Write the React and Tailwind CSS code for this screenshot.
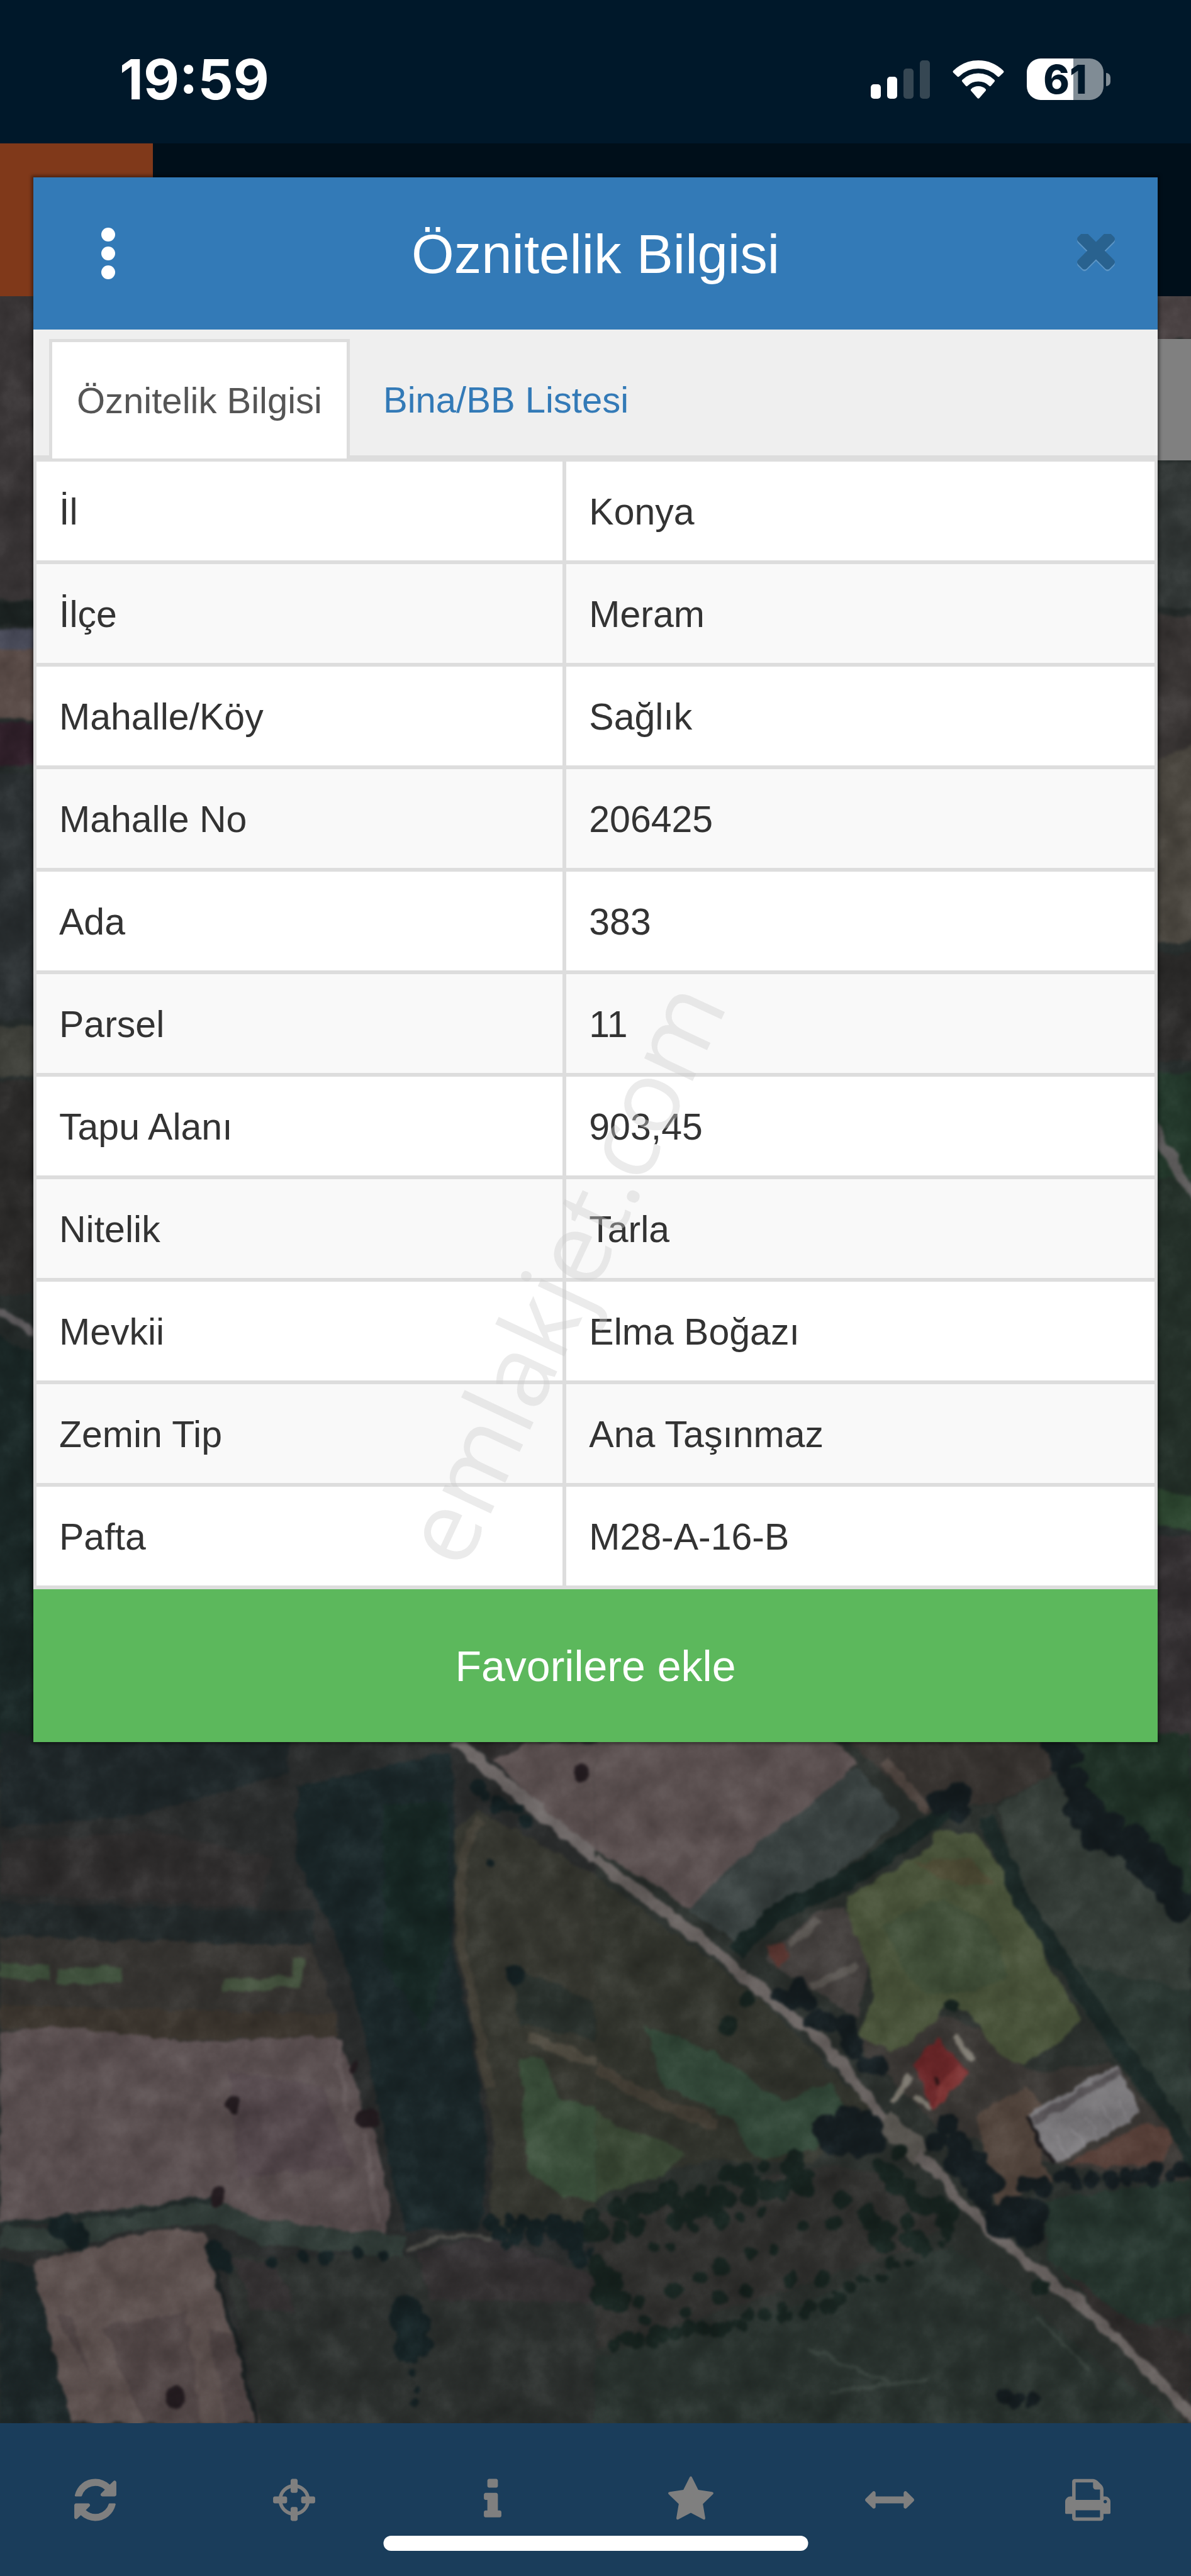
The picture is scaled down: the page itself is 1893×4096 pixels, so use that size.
import React from 'react';

const attributes = [
  ['İl', 'Konya'],
  ['İlçe', 'Meram'],
  ['Mahalle/Köy', 'Sağlık'],
  ['Mahalle No', '206425'],
  ['Ada', '383'],
  ['Parsel', '11'],
  ['Tapu Alanı', '903,45'],
  ['Nitelik', 'Tarla'],
  ['Mevkii', 'Elma Boğazı'],
  ['Zemin Tip', 'Ana Taşınmaz'],
  ['Pafta', 'M28-A-16-B'],
];

const tools = [
  {
    label: 'Yenile',
    width: 1536,
    className: 'w-[67px]',
    path: 'M1511 1056q0 5-1 7-64 268-268 434.5t-478 166.5q-146 0-282.5-55t-243.5-157l-129 129q-19 19-45 19t-45-19-19-45v-448q0-26 19-45t45-19h448q26 0 45 19t19 45-19 45l-137 137q71 66 161 102t187 36q134 0 250-65t186-179q11-17 53-117 8-23 30-23h192q13 0 22.5 9.5t9.5 22.5zm25-800v448q0 26-19 45t-45 19h-448q-26 0-45-19t-19-45 19-45l138-138q-148-137-349-137-134 0-250 65t-186 179q-11 17-53 117-8 23-30 23h-199q-13 0-22.5-9.5t-9.5-22.5v-7q65-268 270-434.5t480-166.5q146 0 284 55.5t245 156.5l130-129q19-19 45-19t45 19 19 45z',
  },
  {
    label: 'Konumum',
    width: 1536,
    className: 'w-[67px]',
    path: 'M1197 1024h-109q-26 0-45-19t-19-45v-128q0-26 19-45t45-19h109q-32-108-112.5-188.5t-188.5-112.5v109q0 26-19 45t-45 19h-128q-26 0-45-19t-19-45v-109q-108 32-188.5 112.5t-112.5 188.5h109q26 0 45 19t19 45v128q0 26-19 45t-45 19h-109q32 108 112.5 188.5t188.5 112.5v-109q0-26 19-45t45-19h128q26 0 45 19t19 45v109q108-32 188.5-112.5t112.5-188.5zm339-192v128q0 26-19 45t-45 19h-143q-37 161-154.5 278.5t-278.5 154.5v143q0 26-19 45t-45 19h-128q-26 0-45-19t-19-45v-143q-161-37-278.5-154.5t-154.5-278.5h-143q-26 0-45-19t-19-45v-128q0-26 19-45t45-19h143q37-161 154.5-278.5t278.5-154.5v-143q0-26 19-45t45-19h128q26 0 45 19t19 45v143q161 37 278.5 154.5t154.5 278.5h143q26 0 45 19t19 45z',
  },
  {
    label: 'Bilgi',
    width: 640,
    className: 'w-[28px]',
    path: 'M640 1344v128q0 26-19 45t-45 19h-512q-26 0-45-19t-19-45v-128q0-26 19-45t45-19h64v-384h-64q-26 0-45-19t-19-45v-128q0-26 19-45t45-19h384q26 0 45 19t19 45v576h64q26 0 45 19t19 45zm-128-1152v192q0 26-19 45t-45 19h-256q-26 0-45-19t-19-45v-192q0-26 19-45t45-19h256q26 0 45 19t19 45z',
  },
  {
    label: 'Favoriler',
    width: 1664,
    className: 'w-[72px]',
    path: 'M1664 647q0 22-26 48l-363 354 86 500q1 7 1 20 0 21-10.5 35.5t-30.5 14.5q-19 0-40-12l-449-236-449 236q-22 12-40 12-21 0-31.5-14.5t-10.5-35.5q0-6 2-20l86-500-364-354q-25-27-25-48 0-37 56-46l502-73 225-455q19-41 49-41t49 41l225 455 502 73q56 9 56 46z',
  },
  {
    label: 'Ölçüm',
    width: 1792,
    className: 'w-[78px]',
    path: 'M1792 896q0 26-19 45l-256 256q-19 19-45 19t-45-19-19-45v-128h-1024v128q0 26-19 45t-45 19-45-19l-256-256q-19-19-19-45t19-45l256-256q19-19 45-19t45 19 19 45v128h1024v-128q0-26 19-45t45-19 45 19l256 256q19 19 19 45z',
  },
  {
    label: 'Yazdır',
    width: 1664,
    className: 'w-[72px]',
    path: 'M384 1536h896v-256h-896v256zm0-640h896v-384h-160q-40 0-68-28t-28-68v-160h-640v640zm1152 64q0-26-19-45t-45-19-45 19-19 45 19 45 45 19 45-19 19-45zm128 0v416q0 13-9.5 22.5t-22.5 9.5h-224v160q0 40-28 68t-68 28h-960q-40 0-68-28t-28-68v-160h-224q-13 0-22.5-9.5t-9.5-22.5v-416q0-79 56.5-135.5t135.5-56.5h64v-544q0-40 28-68t68-28h672q40 0 88 20t76 48l152 152q28 28 48 76t20 88v256h64q79 0 135.5 56.5t56.5 135.5z',
  },
];

const TIMES =
  'M1298 1322q0 40-28 68l-136 136q-28 28-68 28t-68-28l-294-294-294 294q-28 28-68 28t-68-28l-136-136q-28-28-28-68t28-68l294-294-294-294q-28-28-28-68t28-68l136-136q28-28 68-28t68 28l294 294 294-294q28-28 68-28t68 28l136 136q28 28 28 68t-28 68l-294 294 294 294q28 28 28 68z';

// Row of trees along a line, jittered with a small seeded generator
const treeLine = (x1, y1, x2, y2, count, radius, spread, seed) => {
  let s = seed * 7919;
  const rand = () => {
    s = (s * 16807) % 2147483647;
    return s / 2147483647;
  };
  return Array.from({ length: count }, (_, i) => {
    const t = count > 1 ? i / (count - 1) : 0;
    return {
      x: Math.round(x1 + (x2 - x1) * t + (rand() - 0.5) * spread),
      y: Math.round(y1 + (y2 - y1) * t + (rand() - 0.5) * spread),
      r: Math.round(radius * (0.6 + rand() * 0.6)),
    };
  });
};

const Trees = ({ rows, fill }) => (
  <g fill={fill}>
    {rows.flatMap((row, n) => treeLine(...row).map((t, i) => (
      <ellipse key={`${n}-${i}`} cx={t.x} cy={t.y} rx={t.r} ry={t.r * 0.85} />
    )))}
  </g>
);

const MapWest = () => (
  <g transform="translate(0 1055) scale(.2312 .2713)">
    <path fill="#2a2c2c" d="M0 0H1568V1570H0z" />
    <path fill="#1f2729" d="M0 0h760v90L330 190 0 210z" />
    <path fill="#2f2d2d" d="M0 240l400-20 320 60-40 110-680-30z" />
    <path fill="#22292a" d="M0 380l830 20v80L0 455z" />
    <path fill="#1a2628" d="M780 120L1190 40l10 210-10 230 45 170 40 200 10 150-25 115H1070l-35-110-35-155-60-250-60-150-100-170z" />
    <path fill="#172822" d="M1010 160l170-10 0 330-60 190-110-160z" opacity=".7" />
    <path fill="#363431" d="M0 455l820 20 75 190L0 675z" />
    <path fill="#3c362f" d="M0 610l880 20 10 50-410 10-480-30z" />
    <path stroke="#3f503c" strokeWidth="36" fill="none" d="M0 530l130 8M150 545l170-2" />
    <path stroke="#45533f" strokeWidth="26" fill="none" d="M585 565l105-2 90-8 5-55" />
    <path fill="#5a4f50" d="M0 672l150-15 330 35 400-12 45 70 38 110 28 40 36 160-12 70-185-5-130-25-110-20-15-45-175 25-400 40z" />
    <path fill="#50454a" d="M600 760l250 30 80 180-300 30z" opacity=".6" />
    <path stroke="#64595a" strokeWidth="16" fill="none" d="M890 690l20 160M960 900l35 200" />
    <path stroke="#323d39" strokeWidth="52" fill="none" d="M0 1130l130 10 240-55 200-10 120 45 380 35" />
    <path stroke="#232c2b" strokeWidth="12" fill="none" d="M0 1105l300-25 260-38" />
    <path fill="#1d2728" d="M0 1180l85 15 105 355H0z" />
    <path fill="#2c302e" d="M590 1175l520 0 458 20v355H690z" />
    <path fill="#383235" d="M1100 1160l190-30 278 90v60l-440-10zM610 1180l120 10 50 110-120-10z" opacity=".7" />
    <path fill="#5d514f" d="M85 1190l125-30 210-48 120 8 10 60 50 100 40 140 50 130H190l-60-200z" />
    <path fill="#4d4143" d="M270 1330l220-30 40 250h-150zM550 1340l70 10 50 200h-70zM150 1310l40 0 50 140z" opacity=".7" />
    <path stroke="#1b2122" strokeWidth="11" fill="none" d="M555 1180l50 130 75 240" />
    <path stroke="#4d4d49" strokeWidth="9" fill="none" d="M1080 1160q100-50 220-25" />
    {/* Scrub east of the dark field */}
    <path fill="#363730" d="M1195 220l60-50 313 150v790l-280 15 12-225-50-250-50-170z" />
    <path stroke="#444138" strokeWidth="26" fill="none" d="M1270 190q-60 60-60 180l10 120 70 310" />
    <path fill="#29302c" d="M1340 520l228 80v90l-200-40z" />
    <path fill="#3a4e3a" d="M1370 730l60 0 40 90 98 20v210l-90-10-90-60z" />
    <path stroke="#4d493f" strokeWidth="26" fill="none" d="M1390 680l178 60" />
    <path fill="#5b5050" d="M1300 60l100-40h168v245l-120-75z" />
    <path fill="#2c2a2a" d="M1210 0l190 20-100 45z" />
    <path stroke="#6d6766" strokeWidth="28" fill="none" d="M1200 10l50 45 150 105 178 125" />
    <Trees
      fill="#152123"
      rows={[
        [1320, 1120, 1568, 1150, 30, 20, 90, 11],
        [1080, 1270, 1090, 1370, 12, 32, 50, 23],
        [1085, 1400, 1095, 1500, 4, 12, 16, 29],
        [1250, 130, 1380, 190, 6, 20, 24, 31],
        [720, 1180, 1010, 1170, 5, 18, 14, 37],
        [150, 1110, 200, 1130, 6, 30, 28, 41],
        [560, 1150, 590, 1190, 4, 26, 14, 43],
        [1290, 290, 1290, 290, 1, 18, 0, 47],
        [1355, 540, 1355, 540, 1, 24, 0, 53],
      ]}
    />
    <g fill="#241c20">
      <ellipse cx="615" cy="833" rx="20" ry="22" />
      <ellipse cx="968" cy="865" rx="28" ry="26" />
      <ellipse cx="1533" cy="88" rx="22" ry="22" />
      <ellipse cx="575" cy="1038" rx="20" ry="24" />
      <ellipse cx="463" cy="1490" rx="26" ry="26" />
      <ellipse cx="932" cy="750" rx="10" ry="16" />
    </g>
  </g>
);

const MapEast = () => (
  <g transform="translate(362.5 1055) scale(.2312 .2713)">
    <path fill="#2b302d" d="M0 0H1568V1570H0z" />
    <path fill="#32342d" d="M0 320l240 150 200 130 280 240-140 120-250 0L0 1000z" />
    <path fill="#324738" d="M130 655l180 60 180 110 130-40 40 60-80 90-160 20-60-90-180-70z" />
    <path fill="#394734" d="M0 850l60 30 180 60-80 60-160 40z" />
    <path stroke="#443f36" strokeWidth="30" fill="none" d="M0 750l120 60 200 70" />
    <path fill="#5b5050" d="M0 0h620l70 70-190 180-260 142-140-82L0 262z" />
    <path fill="#394140" d="M690 78l120 112-150 110-290 165-130-70 190-150z" />
    <path fill="#373330" d="M650 0h550v90l-130 60-200 30z" />
    <path stroke="#504641" strokeWidth="26" fill="none" d="M760 60l110 110" />
    <path fill="#1f3026" d="M1200 0h368v390l-250-160z" />
    <path fill="#353d38" d="M1060 160l140-70 100 130 268 180v560l-130-170-170-190-160-250z" />
    <path fill="#2b3732" d="M1270 520l298 60v390l-150-200z" />
    {/* Yard around the farmhouse */}
    <path fill="#3a3734" d="M680 690l160-80 180 60 120 90 230-20 198 210v60l-370-40-300-90z" />
    <path fill="#433f3d" d="M450 500l140-100 70-10 60 130-30 120-190-100z" />
    <path stroke="#5a5652" strokeWidth="18" fill="none" d="M510 475l80-55M570 570l120-50" />
    <path fill="#5a3732" d="M455 480l40-10 15 35-30 20z" />
    <path fill="#49533a" d="M665 365l100-50 120-60 15-35 100 0 60 80 90 130 60 110 70 100-60 55-90 50-70-25-80-100-50-10-90 80-60 25-90-35 40-80-10-80-50-100z" />
    <path fill="#3e4e39" d="M760 430l150-60 130 60 50 120-100 30-110 10-70-60z" opacity=".7" />
    <path fill="#544531" d="M830 290l160-10 60 60-90 0z" opacity=".5" />
    <path fill="#51443c" d="M1000 860l130-70 60 60-20 120 40 30-150 60-40-130z" />
    <path fill="#563f38" d="M1240 970l210-100 90 30-60 70z" />
    <path fill="#7b797c" d="M1142 855l228-115 68 112-232 118z" />
    <path fill="#5a5659" d="M1150 862l228-114 10 16-228 116z" />
    <path stroke="#8a888c" strokeWidth="4" fill="none" d="M1215 900l30 52M1255 880l30 52M1295 860l30 52M1335 840l30 52M1375 820l30 52" />
    <path stroke="#1d1b1d" strokeWidth="10" fill="none" d="M1138 860l66 112" />
    <path stroke="#7c786f" strokeWidth="15" fill="none" d="M780 830l50-60M840 815l45 28M945 680l45 50" />
    <path fill="#6c282a" d="M836 742l66-60 78 80-92 85z" />
    <path fill="#7c3333" d="M905 790l50-45 26 18-92 84z" />
    <ellipse cx="900" cy="780" rx="7" ry="9" fill="#2b1516" />
    {/* Orchard */}
    <path fill="#30302e" d="M0 1080l600-110 180 20 150 110-110 60-780 220H0z" />
    <path fill="#29322e" d="M0 1400l540-120 400-130 628 420H0z" />
    <path stroke="#46504a" strokeWidth="9" fill="none" opacity=".5" d="M560 1380l220 80M620 1480l260-30M1160 1310l140 120" />
    <path fill="#26352e" d="M1180 1050l388-50v300l-200 40-180-160z" />
    <path fill="#302d2c" d="M1210 1190l180 120 178 40v200z" />
    <path stroke="#686260" strokeWidth="28" fill="none" d="M0 282l230 150 200 140 170 120 140 155 70 60" />
    <path stroke="#5b5853" strokeWidth="54" fill="none" d="M760 870l100 80" />
    <path stroke="#686260" strokeWidth="25" fill="none" d="M850 940l130 130 150 112 170 115 280 240" />
    <path stroke="#172422" strokeWidth="44" fill="none" d="M370 490l110-90 180-70 190-110 90-60" />
    <path stroke="#1c2927" strokeWidth="40" fill="none" d="M1030 190l90 180 130 170 150 190 130 150 50 90" />
    <Trees
      fill="#151d20"
      rows={[
        [1215, 40, 1310, 200, 18, 30, 50, 61],
        [1310, 200, 1568, 380, 26, 34, 60, 67],
        [490, 570, 740, 740, 18, 24, 40, 71],
        [600, 900, 740, 890, 20, 34, 70, 73],
        [900, 900, 1040, 1030, 14, 32, 70, 79],
        [1090, 1080, 1150, 1100, 7, 38, 50, 83],
        [1130, 1010, 1568, 985, 22, 20, 30, 89],
        [930, 140, 960, 170, 6, 30, 40, 97],
        [1080, 1490, 1140, 1500, 5, 20, 30, 101],
      ]}
    />
    <Trees
      fill="#17231f"
      rows={[
        [0, 1100, 560, 975, 54, 24, 80, 103],
        [0, 1200, 60, 1280, 8, 28, 50, 107],
        [40, 1370, 640, 1280, 30, 17, 26, 109],
        [640, 1260, 930, 1130, 12, 13, 24, 113],
        [140, 1160, 560, 1030, 8, 22, 30, 127],
        [130, 1260, 560, 1110, 7, 20, 40, 131],
        [130, 1310, 600, 1210, 6, 20, 30, 137],
        [640, 1080, 880, 1140, 12, 24, 70, 139],
        [760, 970, 930, 1100, 14, 26, 40, 149],
        [400, 595, 350, 655, 2, 26, 0, 151],
        [800, 940, 800, 940, 1, 28, 0, 157],
        [940, 612, 940, 612, 1, 24, 0, 163],
        [1165, 1245, 1180, 1245, 2, 20, 8, 167],
      ]}
    />
  </g>
);

const SatelliteMap = () => (
  <svg className="absolute inset-0 h-full w-full" viewBox="0 180 725 1295" preserveAspectRatio="none" aria-hidden="true">
    <defs>
      <filter id="rough" x="0" y="0" width="100%" height="100%" colorInterpolationFilters="sRGB">
        <feTurbulence type="fractalNoise" baseFrequency=".09" numOctaves="3" seed="4" result="n" />
        <feDisplacementMap in="SourceGraphic" in2="n" scale="6" xChannelSelector="R" yChannelSelector="G" />
        <feGaussianBlur stdDeviation=".8" />
      </filter>
      <filter id="grain" x="0" y="0" width="100%" height="100%" colorInterpolationFilters="sRGB">
        <feTurbulence type="fractalNoise" baseFrequency=".05" numOctaves="5" seed="9" />
        <feColorMatrix values="1 .4 0 0 -.22  1 .4 0 0 -.22  1 .4 0 0 -.22  0 0 0 0 1" />
      </filter>
    </defs>
    <g filter="url(#rough)">
      <path fill="#262c2b" d="M-20 170H745V1490H-20z" />
      {/* Strip left of the dialog */}
      <path fill="#393536" d="M-9 170h31v195H-9z" />
      <path fill="#1c2322" d="M-9 366h31v14H-9z" />
      <path fill="#4a4c5a" d="M-9 382h31v14H-9z" />
      <path fill="#5a4c48" d="M-9 396h31v42H-9z" />
      <path fill="#30202a" d="M-9 440h31v26H-9z" />
      <path fill="#2a2f31" d="M-9 470h31v150H-9z" />
      <path fill="#3e3f39" d="M-9 625h31v30H-9z" />
      <path fill="#2c2b2a" d="M-9 658h31v130H-9z" />
      <path stroke="#5f5c5e" strokeWidth="5" fill="none" d="M-9 794l33 19" />
      <path fill="#1a2726" d="M-9 808l31 16v240H-9z" />
      {/* Strip right of the dialog */}
      <path fill="#4a4243" d="M700 170h35v36h-35z" />
      <path fill="#323736" d="M700 281h35v90h-35z" />
      <path fill="#3b3736" d="M700 375h35v90h-35z" />
      <path fill="#4a463f" d="M700 465l35-15v120l-35 6z" />
      <path fill="#2c2b2a" d="M700 580h35v65h-35z" />
      <path fill="#23382b" d="M700 652h35v64h-35z" />
      <path fill="#243029" d="M700 716h35v200h-35z" />
      <path stroke="#605e5e" strokeWidth="6" fill="none" d="M700 684l34 56" />
      <path fill="#2e4731" d="M700 905l35 8v20l-35-7z" />
      <path fill="#332f31" d="M700 935h35v125h-35z" />
      <MapWest />
      <MapEast />
    </g>
    <path className="mix-blend-soft-light" filter="url(#grain)" opacity=".28" d="M0 180H725V1475H0z" />
  </svg>
);

const StatusBar = () => (
  <div className="flex h-[228px] items-center justify-between bg-[#00182a] pt-6 pr-[128px] pl-[190px] text-white">
    <time className="font-['Inter',sans-serif] text-[88px] leading-none font-bold">19:59</time>
    <div className="flex items-center gap-9">
      <svg className="h-[61px] w-[94px]" viewBox="0 0 94 61" aria-hidden="true">
        <rect x="0" y="38" width="16" height="23" rx="5" fill="#fff" />
        <rect x="26" y="26" width="16" height="35" rx="5" fill="#fff" />
        <rect x="52" y="13" width="16" height="48" rx="5" fill="#364753" />
        <rect x="78" y="0" width="16" height="61" rx="5" fill="#364753" />
      </svg>
      <svg className="h-[61px] w-[82px]" viewBox="0 0 82 61" fill="#fff" aria-hidden="true">
        <path d="M1.200 16.500Q18 0 41 0T80.800 16.500Q82.200 18 80.800 19.500L74.500 25.500Q73 27 71.500 25.500Q59 13 41 13T10.500 25.500Q9 27 7.500 25.500L1.200 19.500Q-.200 18 1.200 16.500z" />
        <path d="M15.500 31Q26 20.500 41 20.500T66.500 31Q68 32.500 66.500 34L61 40.500Q59.600 41.800 58.200 40.500Q51.500 33.500 41 33.500T23.800 40.500Q22.400 41.800 21 40.500L15.500 34Q14 32.500 15.500 31z" />
        <path d="M29.500 45.500Q34 41 41 41T52.500 45.500Q53.800 47 52.500 48.500L42.500 60Q41 61.600 39.500 60L29.500 48.500Q28.200 47 29.500 45.500z" />
      </svg>
      <div className="flex items-center gap-1">
        <div className="flex h-[66px] w-[122px] items-center justify-center rounded-[22px] bg-linear-to-r from-white from-61% to-[#808c95] to-61% font-['Inter',sans-serif] text-[63px] leading-none font-extrabold text-[#00182a]">
          61
        </div>
        <div className="h-[21px] w-[7px] rounded-r-full bg-[#808c95]"></div>
      </div>
    </div>
  </div>
);

const AttributeDialog = () => (
  <section role="dialog" aria-labelledby="dialog-title" className="absolute inset-x-[53px] top-[282px] shadow-[0_0_5px_3px_rgba(0,0,0,0.4)]">
    <header className="grid h-[242px] grid-cols-[1fr_auto_1fr] items-center bg-[#337ab7] px-[68px] text-white">
      <button type="button" aria-label="Menü" className="justify-self-start px-10">
        <svg className="h-[82px] w-[22px]" viewBox="0 0 22 82" fill="currentColor">
          <circle cx="11" cy="11" r="11" />
          <circle cx="11" cy="41" r="11" />
          <circle cx="11" cy="71" r="11" />
        </svg>
      </button>
      <h1 id="dialog-title" className="text-[87px] leading-none">Öznitelik Bilgisi</h1>
      <button type="button" aria-label="Kapat" className="justify-self-end">
        <svg className="h-[62px] w-[60px]" viewBox="110 434 1188 1228">
          <path d={TIMES} fill="#5c95c5" transform="translate(0 54)" />
          <path d={TIMES} fill="#29628f" />
        </svg>
      </button>
    </header>

    <nav className="flex h-[205px] items-end gap-[10px] border-b-5 border-[#ddd] bg-[#efefef] px-[25px] text-[58px]">
      <a href="#oznitelik" aria-current="page" className="-mb-[5px] flex h-[190px] items-center border-5 border-b-0 border-[#ddd] bg-white px-[39px] text-[#555]">
        Öznitelik Bilgisi
      </a>
      <a href="#bina" className="flex h-[185px] items-center px-[43px] pt-2 text-[#337ab7]">
        Bina/BB Listesi
      </a>
    </nav>

    <table className="w-full border-separate border-spacing-0 border-5 border-b-0 border-[#ddd] bg-white text-left text-[59px] leading-none text-[#333]">
      <tbody>
        {attributes.map(([name, value]) => (
          <tr key={name} className="h-[163px] even:bg-[#f9f9f9]">
            <th scope="row" className="w-[47.4%] border-r-6 border-b-6 border-[#ddd] pt-1 pr-0 pb-0 pl-[36px] font-normal">{name}</th>
            <td className="border-b-6 border-[#ddd] pt-1 pr-0 pb-0 pl-[36px]">{value}</td>
          </tr>
        ))}
      </tbody>
    </table>

    <button type="button" className="h-[243px] w-full bg-[#5cb85c] text-[68px] text-white">
      Favorilere ekle
    </button>
  </section>
);

const Toolbar = () => (
  <footer className="relative h-[243px] bg-[#1a3d5b]">
    <div className="grid h-full grid-cols-6">
      {tools.map((tool) => (
        <button key={tool.label} type="button" aria-label={tool.label} className="flex items-center justify-center pr-3 text-[#7f7f7f]">
          <svg className={`h-[78px] ${tool.className}`} viewBox={`0 0 ${tool.width} 1792`} fill="currentColor">
            <path d={tool.path} />
          </svg>
        </button>
      ))}
    </div>
    {/* Home indicator */}
    <div className="absolute bottom-10 left-1/2 h-6 w-[675px] -translate-x-1/2 rounded-full bg-white"></div>
  </footer>
);

const App = () => (
  <div className="relative flex min-h-screen flex-col overflow-hidden bg-[#000f1a] font-['Liberation_Sans',sans-serif]">
    <StatusBar />
    <div className="flex h-[243px]">
      <div className="w-[243px] bg-[#80391a]"></div>
    </div>
    <main className="relative flex-1">
      <SatelliteMap />
      <div className="absolute top-[68px] right-0 h-[193px] w-[120px] bg-[#808080]"></div>
    </main>
    <Toolbar />
    <AttributeDialog />
    <div className="pointer-events-none absolute inset-0 flex items-center justify-center">
      <span className="-rotate-65 pb-[122px] font-['Open_Sans',sans-serif] text-[159px] leading-none text-[#cdcdcd]/40">
        emlakjet.com
      </span>
    </div>
  </div>
);

export default App;
